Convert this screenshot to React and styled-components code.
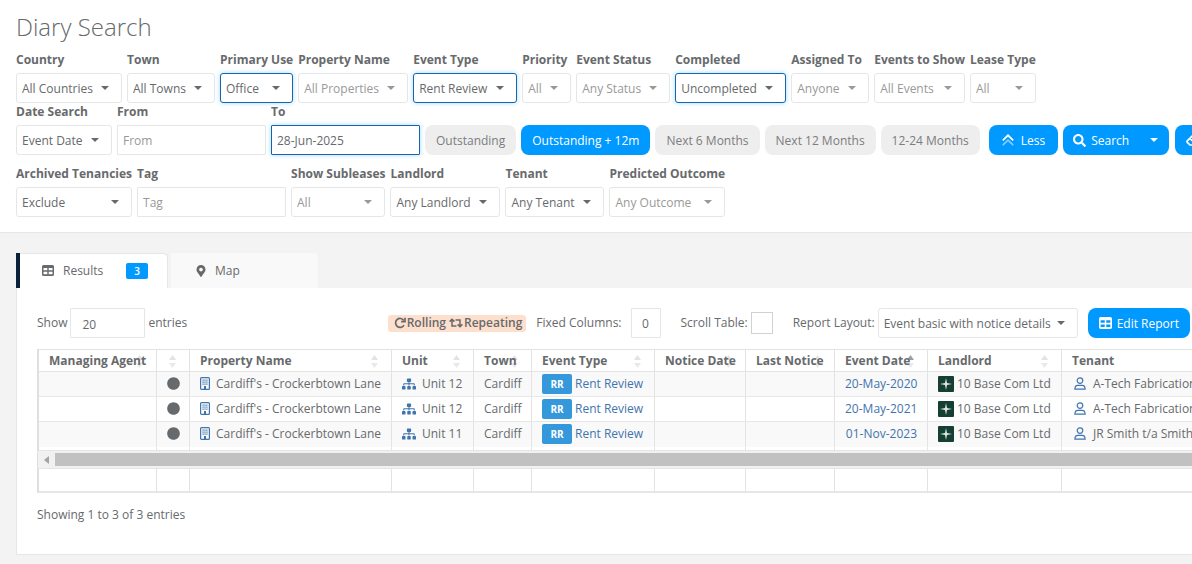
import React, { useState } from 'react'
import styled, { createGlobalStyle, css } from 'styled-components'
import { FaCircle, FaMapMarkerAlt, FaSearch, FaSitemap } from 'react-icons/fa'

const GlobalStyle = createGlobalStyle`
  * {
    box-sizing: border-box;
  }
  body {
    margin: 0;
    overflow-x: hidden;
    background-color: #f3f3f3;
    color: #676a6c;
    font-family: "Open Sans", "Liberation Sans", sans-serif;
    font-size: 12px;
    line-height: 18px;
  }
  button, input, select {
    font-family: inherit;
    font-size: inherit;
    color: inherit;
  }
  svg {
    flex-shrink: 0;
  }
  a {
    color: #3f74ad;
    text-decoration: none;
  }
`

const SearchPanel = styled.header`
  padding: 10px 0 15px 16px;
  background-color: #fff;
  border-bottom: 1px solid #e5e6e7;
  overflow: hidden;
`

const Title = styled.h1`
  margin: 0 0 7px;
  font-size: 24px;
  line-height: 34px;
  font-weight: 300;
`

const FilterRow = styled.div`
  display: flex;
  align-items: flex-end;
  gap: 5px;
  margin-bottom: ${({ $space }) => $space || 0}px;
`

const Field = styled.div`
  display: flex;
  flex-direction: column;
  flex-shrink: 0;
  gap: 4px;
`

const Label = styled.label`
  font-weight: 700;
  white-space: nowrap;
`

const SelectWrap = styled.div`
  position: relative;
  display: flex;
  color: ${({ $muted }) => ($muted ? '#999' : '#676a6c')};
`

const focused = css`
  border-color: #1b62ab;
  box-shadow: 0 0 5px #9fdcff;
`

const Select = styled.select`
  appearance: none;
  flex: 1;
  height: 30px;
  padding: 0 28px 0 5px;
  background-color: #fff;
  border: 1px solid #e5e6e7;
  border-radius: 3px;
  outline: none;
  ${({ $active }) => $active && focused}
`

const Caret = styled.span`
  position: absolute;
  right: 13px;
  top: 13px;
  border: 4px solid transparent;
  border-top-color: currentColor;
  border-bottom-width: 0;
  pointer-events: none;
`

const TextInput = styled.input`
  width: 149px;
  height: 30px;
  padding: 0 5px;
  background-color: #fff;
  border: 1px solid #e5e6e7;
  border-radius: 1px;
  outline: none;
  &::placeholder {
    color: #999;
  }
  ${({ $active }) => $active && focused}
`

const Button = styled.button`
  display: flex;
  align-items: center;
  flex-shrink: 0;
  gap: 5px;
  height: 30px;
  padding: 0 11px;
  border: 0;
  border-radius: 8px;
  white-space: nowrap;
  cursor: pointer;
  background-color: ${({ $primary }) => ($primary ? '#0099ff' : '#eeeeee')};
  color: ${({ $primary }) => ($primary ? '#fff' : '#7b7d7f')};
`

const Actions = styled.div`
  display: flex;
  flex-shrink: 0;
  gap: 5px;
  margin-left: 4px;
`

const LessButton = styled(Button)`
  gap: 7px;
  padding: 0 13px;
`

const SplitButton = styled.div`
  display: flex;
  margin-right: 1px;
`

const SplitMain = styled(Button)`
  padding: 0 10px;
  border-radius: 8px 0 0 8px;
`

const SplitToggle = styled(Button)`
  border-radius: 0 8px 8px 0;
`

const ButtonCaret = styled.span`
  border: 4px solid transparent;
  border-top-color: #fff;
  border-bottom-width: 0;
`

const Results = styled.main`
  padding: 20px 0 9px 16px;
  overflow: hidden;
`

const Tabs = styled.div`
  display: flex;
  gap: 3px;
`

const Tab = styled.button`
  display: flex;
  align-items: center;
  gap: ${({ $active }) => ($active ? 9 : 8)}px;
  height: 35px;
  width: ${({ $active }) => ($active ? 152 : 147)}px;
  padding: 0 20px 0 ${({ $active }) => ($active ? 22 : 24)}px;
  border: 0;
  border-left: ${({ $active }) => ($active ? '4px solid #0a2239' : 0)};
  border-radius: 0 4px 0 0;
  background-color: ${({ $active }) => ($active ? '#fff' : '#f9f9f9')};
  box-shadow: ${({ $active }) => ($active ? 'inset -1px 1px 0 #e7e7e7' : 'none')};
`

const Count = styled.span`
  margin-left: auto;
  width: 22px;
  border-radius: 2px;
  background-color: #0099ff;
  color: #fff;
  font-size: 10px;
  line-height: 16px;
  font-weight: 600;
  text-align: center;
`

const Panel = styled.section`
  padding: 20px 0 30px 20px;
  background-color: #fff;
  border: 1px solid #e7e7e7;
  border-width: 0 0 1px 1px;
`

const Toolbar = styled.div`
  display: flex;
  align-items: center;
  justify-content: space-between;
  padding-right: 2px;
  margin-bottom: 11px;
  white-space: nowrap;
`

const ToolGroup = styled.div`
  display: flex;
  align-items: center;
  gap: ${({ $gap }) => $gap || 3}px;
`

const PageSize = styled(TextInput)`
  width: 75px;
  padding: 2px 11px 0;
`

const FixedCount = styled(TextInput)`
  width: 30px;
  text-align: center;
`

const CheckBox = styled.input`
  appearance: none;
  width: 22px;
  height: 22px;
  margin: 0;
  background-color: #fff;
  border: 1px solid #d2d2d2;
  &:checked {
    background-color: #0099ff;
  }
`

const Legend = styled.div`
  display: flex;
  align-items: center;
  gap: 3px;
  height: 17px;
  padding: 0 4px 0 6px;
  border-radius: 3px;
  background-color: #fddfcd;
  font-weight: 600;
`

const LegendItem = styled.span`
  display: flex;
  align-items: center;
  gap: 1px;
`

const LayoutSelect = styled(Select)`
  padding-right: 25px;
`

const Grid = styled.div`
  border-left: 1px solid #dedede;
`

const Table = styled.table`
  width: 1275px;
  table-layout: fixed;
  border-collapse: separate;
  border-spacing: 0;
  border-left: 1px solid #e0e0e0;
`

const HeadCell = styled.th`
  position: relative;
  height: 23px;
  padding: 0 10px;
  border: 1px solid #e3e3e3;
  border-width: 1px 1px 1px 0;
  text-align: left;
  font-weight: 700;
  white-space: nowrap;
`

const Sorter = styled.svg`
  position: absolute;
  z-index: -1;
  right: 13px;
  top: 5px;
  width: 7px;
  height: 13px;
`

const HeadRow = styled.tr`
  position: relative;
  z-index: 0;
`

const Row = styled.tr`
  background-color: #fff;
  &:nth-child(odd) {
    background-color: #f9f9f9;
  }
`

const Cell = styled.td`
  height: 25px;
  padding: 0 10px 1px;
  border-right: 1px solid #e3e3e3;
  border-bottom: 1px solid #e7e7e7;
  white-space: nowrap;
  text-align: ${({ $align }) => $align || 'left'};
  ${Row}:last-child & {
    border-bottom-color: #f9f9f9;
  }
`

const GapCell = styled.td`
  height: 3px;
  padding: 0;
  border-right: 1px solid #e3e3e3;
`

const FootCell = styled.td`
  height: 24px;
  padding: 0;
  border-right: 1px solid #e3e3e3;
  border-bottom: 2px solid #e7e7e7;
`

const CellContent = styled.span`
  display: flex;
  align-items: center;
  gap: ${({ $gap }) => $gap || 6}px;
`

const CodeBadge = styled.span`
  width: 30px;
  border-radius: 2px;
  background-color: #3498db;
  color: #fff;
  font-size: 10px;
  line-height: 20px;
  font-weight: 700;
  text-align: center;
`

const ScrollTrack = styled.div`
  display: flex;
  align-items: center;
  height: 19px;
  padding-left: 6px;
  gap: 6px;
  background-color: #f1f1f1;
  border: 1px solid #e5e5e5;
  border-width: 1px 0;
`

const ScrollArrow = styled.span`
  border: 4px solid transparent;
  border-right: 5px solid #a3a3a3;
  border-left-width: 0;
`

const ScrollThumb = styled.div`
  flex: 1;
  height: 13px;
  background-color: #c1c1c1;
`

const Summary = styled.p`
  margin: 13px 0 0;
`

const TableIcon = ({ size = 12 }) => (
  <svg width={size} height={size - 1} viewBox="0 0 12 11" aria-hidden="true">
    <path
      fill="currentColor"
      fillRule="evenodd"
      d="M1.5 0h9A1.5 1.5 0 0 1 12 1.5v8a1.5 1.5 0 0 1-1.5 1.5h-9A1.5 1.5 0 0 1 0 9.5v-8A1.5 1.5 0 0 1 1.5 0zM1.5 3v2.2h3.8V3zM6.7 3v2.2h3.8V3zM1.5 6.8V9.2h3.8V6.8zM6.7 6.8V9.2h3.8V6.8z"
    />
  </svg>
)

const ChevronsIcon = () => (
  <svg width="12" height="12" viewBox="0 0 12 12" fill="none" stroke="currentColor" strokeWidth="1.8" aria-hidden="true">
    <path d="M.8 6.3 6 1.3l5.2 5" />
    <path d="M.8 11.2 6 6.2l5.2 5" opacity=".5" />
  </svg>
)

const EraserIcon = () => (
  <svg width="14" height="12" viewBox="0 0 14 12" fill="none" stroke="currentColor" strokeWidth="1.7" strokeLinejoin="round" aria-hidden="true">
    <path d="M4 11 1.3 8.3a1 1 0 0 1 0-1.4L7 1.3a1 1 0 0 1 1.4 0l3.4 3.4a1 1 0 0 1 0 1.4L7 11zM4 4.3l5 5M4 11h10" />
  </svg>
)

const RollingIcon = () => (
  <svg width="12" height="12" viewBox="0 0 12 12" fill="none" stroke="currentColor" strokeWidth="1.7" aria-hidden="true">
    <path d="M9.8 3.4A4.5 4.5 0 1 0 10 8.2" />
    <path d="M11 .8v3.9H7.1" />
  </svg>
)

const RepeatingIcon = () => (
  <svg width="14" height="10" viewBox="0 0 14 10" fill="none" stroke="currentColor" strokeWidth="1.5" aria-hidden="true">
    <path d="M.6 3.6 3 1.2l2.4 2.4M3 1.5V8h4.5" />
    <path d="M8.6 6.4 11 8.8l2.4-2.4M11 8.5V2H6.5" />
  </svg>
)

const BuildingIcon = () => (
  <svg width="10" height="13" viewBox="0 0 10 13" fill="none" stroke="#3f74ad" aria-hidden="true">
    <rect x=".6" y=".6" width="8.8" height="11.8" rx="1" strokeWidth="1.2" />
    <path d="M2.5 3.2h1.2M4.4 3.2h1.2M6.3 3.2h1.2M2.5 5.2h1.2M4.4 5.2h1.2M6.3 5.2h1.2M2.5 7.2h1.2M4.4 7.2h1.2M6.3 7.2h1.2" strokeWidth="1.2" />
    <path d="M5 9v3.4" strokeWidth="2" />
  </svg>
)

const TenantIcon = () => (
  <svg width="15" height="13" viewBox="-2 0 15 13" fill="none" stroke="#3f74ad" strokeWidth="1.2" aria-hidden="true">
    <circle cx="6" cy="3.6" r="2.8" />
    <path d="M.9 12.2c0-2.6 1.4-3.8 3-3.8h4.2c1.6 0 3 1.2 3 3.8z" />
  </svg>
)

const LandlordLogo = () => (
  <svg width="16" height="16" viewBox="0 0 16 16" aria-hidden="true">
    <rect width="16" height="16" rx="1" fill="#153f33" />
    <path fill="#dfe9e2" d="M8 2l1 5L14 8l-5 1L8 14l-1-5L2 8l5-1z" />
  </svg>
)

function SortIcon({ sorted }) {
  return (
    <Sorter viewBox="0 0 7 13" aria-hidden="true">
      <path d="M3.5 0 7 5H0z" fill={sorted ? '#9c9ea0' : '#e2e3e4'} />
      <path d="M3.5 13 7 8H0z" fill="#e8e9ea" />
    </Sorter>
  )
}

function SelectField({ id, label, value, muted, active }) {
  return (
    <Field>
      <Label htmlFor={id}>{label}</Label>
      <SelectWrap $muted={muted}>
        <Select id={id} $active={active}>
          <option>{value}</option>
        </Select>
        <Caret />
      </SelectWrap>
    </Field>
  )
}

function InputField({ id, label, value, placeholder, active }) {
  return (
    <Field>
      <Label htmlFor={id}>{label}</Label>
      <TextInput id={id} type="text" defaultValue={value} placeholder={placeholder} $active={active} />
    </Field>
  )
}

const mainFilters = [
  { id: 'country', label: 'Country', value: 'All Countries' },
  { id: 'town', label: 'Town', value: 'All Towns' },
  { id: 'use', label: 'Primary Use', value: 'Office', active: true },
  { id: 'property', label: 'Property Name', value: 'All Properties', muted: true },
  { id: 'eventType', label: 'Event Type', value: 'Rent Review', active: true },
  { id: 'priority', label: 'Priority', value: 'All', muted: true },
  { id: 'status', label: 'Event Status', value: 'Any Status', muted: true },
  { id: 'completed', label: 'Completed', value: 'Uncompleted', active: true },
  { id: 'assigned', label: 'Assigned To', value: 'Anyone', muted: true },
  { id: 'show', label: 'Events to Show', value: 'All Events', muted: true },
  { id: 'lease', label: 'Lease Type', value: 'All', muted: true },
]

const periods = ['Outstanding', 'Outstanding + 12m', 'Next 6 Months', 'Next 12 Months', '12-24 Months']

const columns = [
  { title: 'Managing Agent', width: 118 },
  { title: '', width: 33 },
  { title: 'Property Name', width: 202 },
  { title: 'Unit', width: 82 },
  { title: 'Town', width: 58 },
  { title: 'Event Type', width: 123 },
  { title: 'Notice Date', width: 91 },
  { title: 'Last Notice', width: 89 },
  { title: 'Event Date', width: 93, sorted: true },
  { title: 'Landlord', width: 134 },
  { title: 'Tenant', width: 251 },
]

const rows = [
  { unit: 'Unit 12', date: '20-May-2020', tenant: 'A-Tech Fabrications' },
  { unit: 'Unit 12', date: '20-May-2021', tenant: 'A-Tech Fabrications' },
  { unit: 'Unit 11', date: '01-Nov-2023', tenant: 'JR Smith t/a Smiths' },
]

const Columns = () => (
  <colgroup>
    {columns.map((col, i) => <col key={i} style={{ width: col.width }} />)}
  </colgroup>
)

function ResultsTable() {
  return (
    <Grid>
      <Table>
        <Columns />
        <thead>
          <HeadRow>
            {columns.map((col, i) => (
              <HeadCell key={i} scope="col">{col.title}<SortIcon sorted={col.sorted} /></HeadCell>
            ))}
          </HeadRow>
        </thead>
        <tbody>
          {rows.map((row) => (
            <Row key={row.date}>
              <Cell />
              <Cell><CellContent><FaCircle size={13} /></CellContent></Cell>
              <Cell><CellContent><BuildingIcon />Cardiff's - Crockerbtown Lane</CellContent></Cell>
              <Cell><CellContent><FaSitemap size={14} color="#3f74ad" />{row.unit}</CellContent></Cell>
              <Cell>Cardiff</Cell>
              <Cell><CellContent $gap={3}><CodeBadge>RR</CodeBadge><a href="#event">Rent Review</a></CellContent></Cell>
              <Cell />
              <Cell />
              <Cell $align="right"><a href="#date">{row.date}</a></Cell>
              <Cell><CellContent $gap={3}><LandlordLogo />10 Base Com Ltd</CellContent></Cell>
              <Cell><CellContent><TenantIcon />{row.tenant}</CellContent></Cell>
            </Row>
          ))}
        </tbody>
        <tfoot>
          <tr>{columns.map((col, i) => <GapCell key={i} />)}</tr>
        </tfoot>
      </Table>
      <ScrollTrack>
        <ScrollArrow />
        <ScrollThumb />
      </ScrollTrack>
      <Table>
        <Columns />
        <tbody>
          <tr>{columns.map((col, i) => <FootCell key={i} />)}</tr>
        </tbody>
      </Table>
    </Grid>
  )
}

function App() {
  const [period, setPeriod] = useState('Outstanding + 12m')

  return (
    <>
      <GlobalStyle />
      <SearchPanel>
        <Title>Diary Search</Title>
        <FilterRow>
          {mainFilters.map((filter) => <SelectField key={filter.id} {...filter} />)}
        </FilterRow>
        <FilterRow $space={10}>
          <SelectField id="dateSearch" label="Date Search" value="Event Date" />
          <InputField id="from" label="From" placeholder="From" />
          <InputField id="to" label="To" value="28-Jun-2025" active />
          {periods.map((name) => (
            <Button key={name} type="button" $primary={name === period} onClick={() => setPeriod(name)}>
              {name}
            </Button>
          ))}
          <Actions>
            <LessButton type="button" $primary><ChevronsIcon />Less</LessButton>
            <SplitButton>
              <SplitMain type="button" $primary><FaSearch size={13} />Search</SplitMain>
              <SplitToggle type="button" $primary aria-label="More search options"><ButtonCaret /></SplitToggle>
            </SplitButton>
            <Button type="button" $primary aria-label="Clear"><EraserIcon /></Button>
          </Actions>
        </FilterRow>
        <FilterRow>
          <SelectField id="archived" label="Archived Tenancies" value="Exclude" />
          <InputField id="tag" label="Tag" placeholder="Tag" />
          <SelectField id="subleases" label="Show Subleases" value="All" muted />
          <SelectField id="landlord" label="Landlord" value="Any Landlord" />
          <SelectField id="tenant" label="Tenant" value="Any Tenant" />
          <SelectField id="outcome" label="Predicted Outcome" value="Any Outcome" muted />
        </FilterRow>
      </SearchPanel>
      <Results>
        <Tabs role="tablist">
          <Tab type="button" role="tab" aria-selected="true" $active>
            <TableIcon />Results<Count>3</Count>
          </Tab>
          <Tab type="button" role="tab" aria-selected="false">
            <FaMapMarkerAlt size={12} />Map
          </Tab>
        </Tabs>
        <Panel>
          <Toolbar>
            <ToolGroup>
              <label htmlFor="pageSize">Show</label>
              <PageSize id="pageSize" type="text" defaultValue="20" />
              <span>entries</span>
            </ToolGroup>
            <ToolGroup $gap={10}>
              <Legend>
                <LegendItem><RollingIcon />Rolling</LegendItem>
                <LegendItem><RepeatingIcon />Repeating</LegendItem>
              </Legend>
              <ToolGroup $gap={20}>
                <ToolGroup $gap={9}>
                  <label htmlFor="fixed">Fixed Columns:</label>
                  <FixedCount id="fixed" type="text" defaultValue="0" />
                </ToolGroup>
                <ToolGroup>
                  <label htmlFor="scroll">Scroll Table:</label>
                  <CheckBox id="scroll" type="checkbox" />
                </ToolGroup>
                <ToolGroup>
                  <label htmlFor="layout">Report Layout:</label>
                  <SelectWrap>
                    <LayoutSelect id="layout">
                      <option>Event basic with notice details</option>
                    </LayoutSelect>
                    <Caret />
                  </SelectWrap>
                </ToolGroup>
              </ToolGroup>
              <Button type="button" $primary><TableIcon size={13} />Edit Report</Button>
            </ToolGroup>
          </Toolbar>
          <ResultsTable />
          <Summary>Showing 1 to 3 of 3 entries</Summary>
        </Panel>
      </Results>
    </>
  )
}

export default App
